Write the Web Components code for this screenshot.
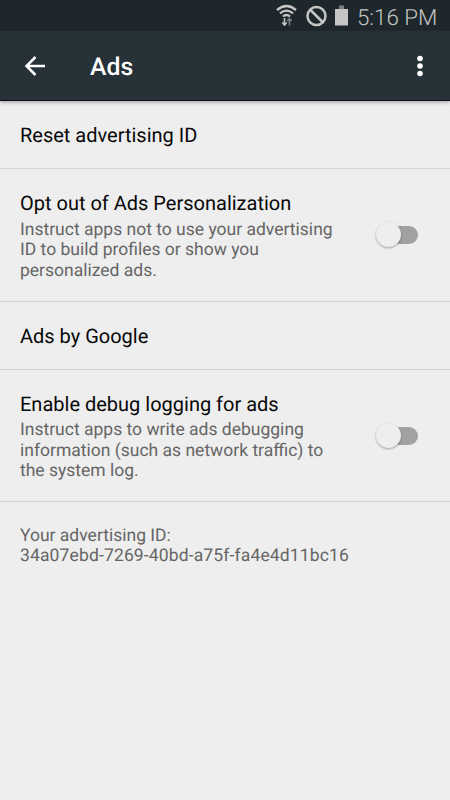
<!DOCTYPE html>
<html lang="en"><head><meta charset="utf-8"><title>Ads</title>
<style>html,body{margin:0;height:100%;background:#eee;overflow:hidden}</style></head>
<body><ads-screen></ads-screen>
<script>
const define=(name,html)=>customElements.define(name,class extends HTMLElement{
  constructor(){super();this.attachShadow({mode:'open'}).innerHTML=html;}
});
define('status-bar',`<style>
:host{display:flex;height:31px;background:#1e272b;color:#c6c6c6;align-items:center;justify-content:flex-start;padding-left:275px;box-sizing:border-box}
svg{display:block;flex:none}.time{font-size:22.300px;line-height:31px;margin-left:7px;padding-top:5px;white-space:nowrap;font-weight:350}
</style>
<svg width="75" height="31" viewBox="275 0 75 31" fill="none" stroke="#c6c6c6">
<path d="M277 10Q286.500 2 296 10M280 13.300Q286.500 8 293 13.300M283 16.500Q286.500 13.500 290 16.500" stroke-width="2.300"/>
<path d="M284.500 18v7m-2.200-2.500 2.200 2.500 2.200-2.500" stroke-width="1.600"/><path d="M289.500 25.500v-7m-2.200 2.500 2.200-2.500 2.200 2.500" stroke="#7b8082" stroke-width="1.600"/>
<circle cx="316.500" cy="16" r="9" stroke-width="2.500"/><path d="M310 9.500 323 22.500" stroke-width="2.500"/>
<path d="M335 9h13v16.500h-13z" fill="#c6c6c6" stroke="none"/><path d="M339 5.500h5V9h-5z" fill="#7b8082" stroke="none"/>
</svg><span class="time">5:16 PM</span>`);
define('app-bar',`<style>
:host{display:flex;height:70px;background:#263238;color:#fff;align-items:center;box-sizing:border-box;border-bottom:1px solid #0c1118;box-shadow:0 1px 4px #3024306e}
h1{font-size:24.800px;line-height:28px;font-weight:500;margin:5px auto 0 43px}svg{display:block;margin-top:1px}.back{margin-left:23px}.more{margin-right:23px}
</style>
<svg class="back" width="24" height="24" viewBox="0 0 24 24" fill="none" stroke="#fff" stroke-width="2.500"><path d="M22 12H4M12.500 3 3.500 12l9 9"/></svg>
<h1><slot></slot></h1>
<svg class="more" width="14" height="24" viewBox="0 0 14 24" fill="#fff"><circle cx="7" cy="4.500" r="2.800"/><circle cx="7" cy="12" r="2.800"/><circle cx="7" cy="19.500" r="2.800"/></svg>`);
define('toggle-switch',`<style>:host{display:block;flex:none}svg{display:block;overflow:visible}.thumb{filter:drop-shadow(0 1px 1px #0005)}</style>
<svg width="50" height="34" viewBox="0 0 50 34"><rect x="10" y="8" width="36" height="18" rx="9" fill="#a1a1a1"/><circle class="thumb" cx="16.500" cy="16.500" r="12.500" fill="#eee"/></svg>`);
define('pref-row',`<style>
:host{display:flex;box-sizing:border-box;height:68px;padding:1px 28px 0 20px;border-bottom:1px solid #d4d4d4;align-items:center;justify-content:space-between}
:host([tall]){height:132.700px;padding-top:0}
:host([tall]) .s{padding-top:3.500px;margin-bottom:-1.500px}
.t{font-size:20px;line-height:26px;color:#080808}.s{font-size:17.500px;line-height:20.400px;color:#656565;white-space:nowrap}
</style><div><div class="t"><slot></slot></div><div class="s"><slot name="summary"></slot></div></div><slot name="control"></slot>`);
define('ads-screen',`<style>
:host{display:block;height:800px;background:#eee;font-family:Roboto,sans-serif;text-rendering:geometricPrecision}
app-bar{position:relative}
.id{font-size:17.500px;line-height:20.400px;color:#656565;padding:23.500px 20px}
.id span{letter-spacing:.14px}
</style><status-bar></status-bar><app-bar>Ads</app-bar>
<pref-row>Reset advertising ID</pref-row>
<pref-row tall>Opt out of Ads Personalization<span slot="summary">Instruct apps not to use your advertising<br>ID to build profiles or show you<br>personalized ads.</span><toggle-switch slot="control"></toggle-switch></pref-row>
<pref-row>Ads by Google</pref-row>
<pref-row tall>Enable debug logging for ads<span slot="summary">Instruct apps to write ads debugging<br>information (such as network traffic) to<br>the system log.</span><toggle-switch slot="control"></toggle-switch></pref-row>
<div class="id">Your advertising ID:<br><span>34a07ebd-7269-40bd-a75f-fa4e4d11bc16</span></div>`);
</script></body></html>
